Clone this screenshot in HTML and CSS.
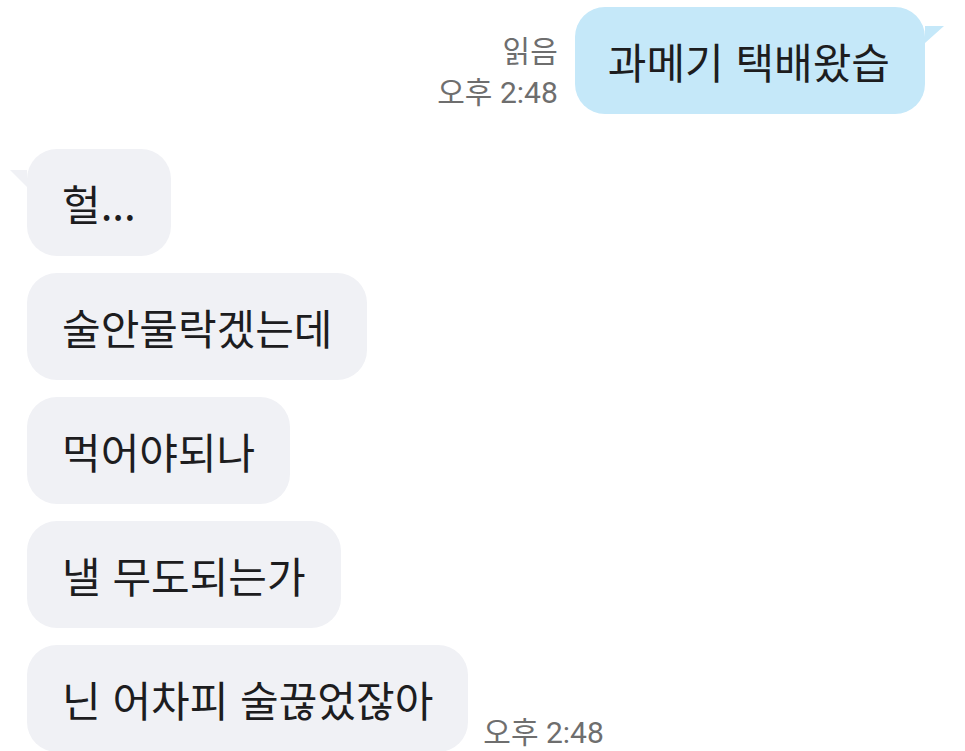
FILE: index.html
```html
<!DOCTYPE html>
<html lang="ko">
<head>
    <meta charset="UTF-8">
    <meta name="viewport" content="width=device-width, initial-scale=1.0">
    <title>채팅</title>
    <link rel="stylesheet" href="styles.css">
</head>
<body>

<div class="chat">
    <div class="row sent">
        <div class="meta">
            <span class="read">읽음</span>
            <span class="time">오후 2:48</span>
        </div>
        <div class="bubble mine tail">과메기 택배왔습</div>
    </div>

    <div class="row received first">
        <div class="bubble other tail">헐...</div>
    </div>
    <div class="row received">
        <div class="bubble other">술안물락겠는데</div>
    </div>
    <div class="row received">
        <div class="bubble other">먹어야되나</div>
    </div>
    <div class="row received">
        <div class="bubble other">낼 무도되는가</div>
    </div>
    <div class="row received">
        <div class="bubble other">닌 어차피 술끊었잖아</div>
        <div class="meta">
            <span class="time">오후 2:48</span>
        </div>
    </div>
</div>

</body>
</html>
```

FILE: styles.css
```css
body {
    margin: 0;
    padding: 0;
    background: #fff;
    font-family: "Noto Sans CJK KR", "Noto Sans", sans-serif;
    color: #1d1d1f;
    overflow: hidden;
}
.chat {
    display: flex;
    flex-direction: column;
    gap: 17px;
    padding-top: 7px;
}
.row {
    display: flex;
    align-items: flex-end;
}
.sent {
    justify-content: flex-end;
    padding-right: 40px;
    gap: 17px;
}
.received {
    padding-left: 27px;
    gap: 15px;
}
.first {
    margin-top: 18px;
}
.bubble {
    position: relative;
    height: 107px;
    box-sizing: border-box;
    padding: 0 35px 0 35px;
    display: flex;
    align-items: center;
    border-radius: 30px;
    font-size: 42px;
    white-space: nowrap;
}
.mine {
    background: #c5e8f9;
    padding: 0 35px 0 33px;
}
.other {
    background: #f0f1f5;
}
.mine.tail::before {
    content: "";
    position: absolute;
    top: 19px;
    right: -19px;
    width: 0;
    height: 0;
    border-top: 17px solid #c5e8f9;
    border-right: 19px solid transparent;
}
.other.tail::before {
    content: "";
    position: absolute;
    top: 21px;
    left: -17px;
    width: 0;
    height: 0;
    border-top: 17px solid #f0f1f5;
    border-left: 17px solid transparent;
}
.meta {
    display: flex;
    flex-direction: column;
    align-items: flex-end;
    padding-bottom: 1px;
    color: #6e6e6e;
    font-family: Roboto, "Noto Sans CJK KR", sans-serif;
    font-size: 30px;
    line-height: 41px;
}
.received .meta {
    padding-bottom: 0;
    margin-bottom: -1px;
}
```
